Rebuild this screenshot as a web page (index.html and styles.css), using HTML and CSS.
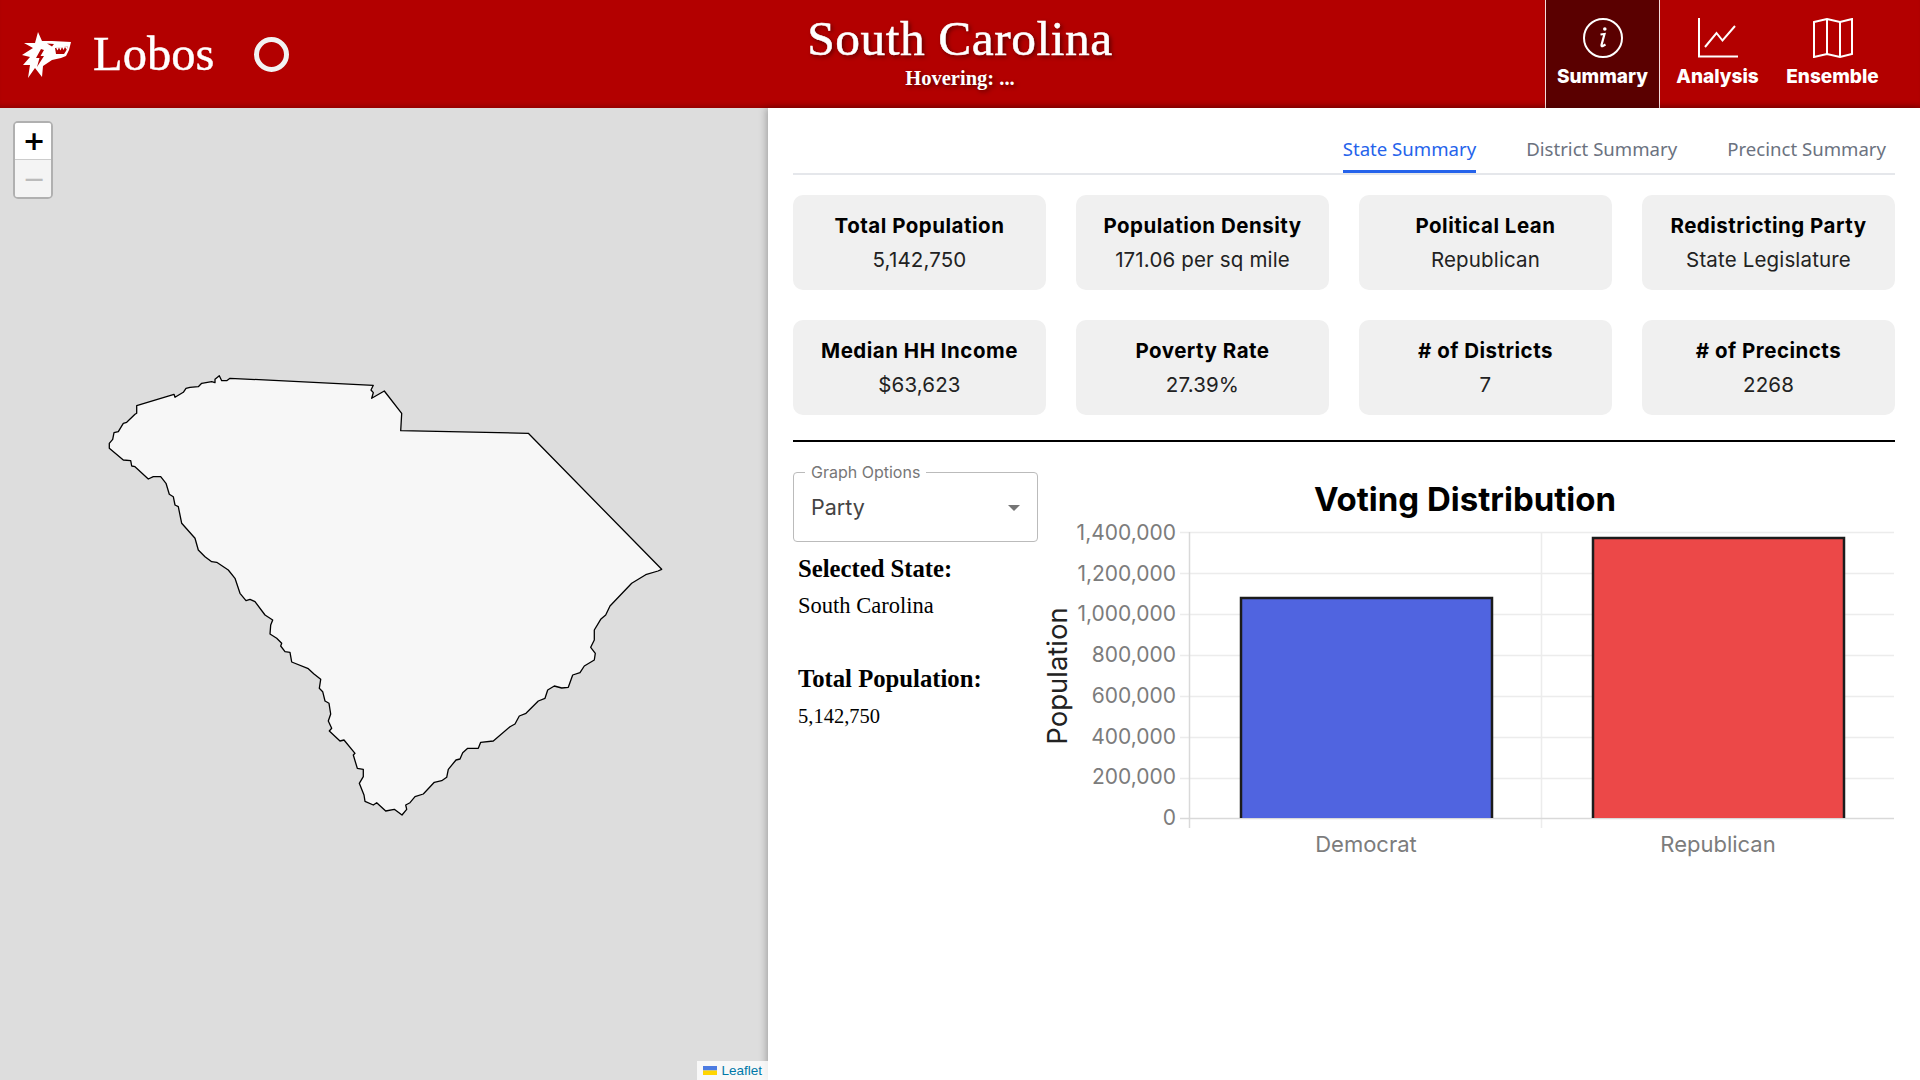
FILE: index.html
```html
<!DOCTYPE html>
<html lang="en">
<head>
    <meta charset="UTF-8">
    <meta name="viewport" content="width=device-width, initial-scale=1.0">
    <title>Lobos - South Carolina</title>
    <link rel="stylesheet" href="styles.css">
</head>
<body>
    <header class="topbar">
        <div class="brand">
            <svg class="brand-logo" viewBox="20 29 54 50" width="54" height="50">
                <path fill="#fff" d="M38 32 L42 41 L52 41 L71 42 L69 50 L66 56 L61 58 L52 60 L43 66 L42 77 L35 68 L28 78 L30 65 L23 65 L30 57 L22 55 L33 48 L24 43 L35 43 Z"/>
                <path fill="#b30000" d="M41 49 L36 58 L39.500 58 L37 67 L44 56 L40.500 56 L44 50 Z"/>
                <path fill="#b30000" d="M47 43.500 L54 44 L52 46.500 Z"/>
                <path fill="#b30000" d="M55 48 L68 46.500 L66 51 L64 54 L56 54 Z"/>
                <path fill="#fff" d="M56 47.500 L57.500 50.500 L59 47.500 L60.500 50.500 L62 47 L63.500 50 L65 47 L66.500 49.500 L68 46.500 Z"/>
            </svg>
            <span class="brand-name">Lobos</span>
            <span class="brand-ring"></span>
        </div>
        <div class="state-head">
            <h1>South Carolina</h1>
            <p>Hovering: ...</p>
        </div>
        <nav class="nav">
            <a class="nav-item active" href="#">
                <svg viewBox="0 0 40 40" width="40" height="40" fill="none" stroke="#fff" stroke-width="2">
                    <circle cx="20" cy="20" r="19"/>
                    <path d="M17.500 16.500 L21.500 16 L18.500 27 Q18.300 28.500 19.500 28.200 L22.500 26.500" stroke-width="2.200"/>
                    <circle cx="21.800" cy="11" r="1.800" fill="#fff" stroke="none"/>
                </svg>
                <span>Summary</span>
            </a>
            <a class="nav-item" href="#">
                <svg viewBox="0 0 40 40" width="40" height="40" fill="none" stroke="#fff" stroke-width="2">
                    <path d="M1 0 V38.500 H40"/>
                    <path d="M7 29 L18.500 15 L24.500 22.500 L37 8"/>
                </svg>
                <span>Analysis</span>
            </a>
            <a class="nav-item" href="#">
                <svg viewBox="0 0 40 40" width="40" height="40" fill="none" stroke="#fff" stroke-width="2">
                    <path d="M1 4 L14 1 L27 4 L39 1 V36 L27 39 L14 36 L1 39 Z"/>
                    <path d="M14 1 V36 M27 4 V39"/>
                </svg>
                <span>Ensemble</span>
            </a>
        </nav>
    </header>

    <main class="content">
        <section class="map">
            <div class="zoom-box">
                <button class="zoom-btn">+</button>
                <button class="zoom-btn disabled">&minus;</button>
            </div>
            <svg class="map-shape" viewBox="0 108 768 972" width="768" height="972">
                <path fill="#f7f7f7" stroke="#000" stroke-width="1.300" stroke-linejoin="round" d="M230 378.300 L373.300 385.300 L371 390 L373.300 392.700 L371.700 398.300 L384.300 391 L401.700 413.300 L400.700 430.700 L528.300 433.300 L661.700 569.300 L658 571 L645.700 574.700 L631.700 583.300 L610 606 L605.700 615 L600.700 619.300 L594.300 630 L594.300 640 L590.700 647.300 L595.300 653.300 L594.300 660 L584.300 666 L580 672.700 L572.700 675 L568.300 687.300 L561.700 688 L554.300 686 L547.700 690 L545 698.300 L538.300 701 L526 713.300 L519.300 716 L515 724 L510 726.700 L493.300 741 L480.700 742.300 L478.300 748.300 L467.700 748.300 L462.700 752.700 L460 759 L456 760 L448.300 769.300 L446.700 777.300 L441.700 780.700 L434.300 782.300 L423.300 794 L415 796.700 L410 802.700 L405.700 805 L406.700 809.300 L402 815 L394.300 809.300 L385.700 811 L376.700 802.700 L373.300 805 L365 801.300 L364 795 L359.300 783.300 L363.300 776.700 L363.300 769.300 L357.300 768.300 L353.300 755 L355 753.300 L344 740 L340 741 L329.300 731 L331.700 728.300 L328.300 721 L330.700 714 L329 703.300 L325 701 L322.700 691.700 L319.300 688.300 L320.700 679.300 L314 674 L308.300 668.700 L291.700 662 L290 652.300 L285 651.700 L280.700 646 L281.700 643.300 L276.700 638.300 L270 634 L270.700 625 L272.700 620 L265 615 L255 601.700 L250 599.300 L246 600.700 L240 593.300 L235 578.300 L228.300 570 L216.700 562.300 L211.700 561.700 L205 556.700 L198.300 550 L195 538.300 L181.700 523.300 L178.300 506.700 L175 505 L173.300 496.700 L169.300 494.300 L166 483.300 L160.700 476.700 L153.300 476.700 L148.300 479 L135 466.700 L131.700 466 L130.700 460.700 L123.300 460 L109.300 448.300 L109.300 443.300 L112.700 439.300 L114 432.700 L118.300 431.700 L123.300 423.300 L126.700 422.300 L135 414.300 L136.700 413.300 L136.700 405.700 L174 394.300 L175 397.300 L183.300 392.300 L186 388.300 L190 387.300 L198.300 386.700 L201.700 383.300 L211.700 381.700 L215 382.700 L215 379.300 L219.300 375.700 L221.700 380.700 L226.700 380.700 Z"/>
            </svg>
            <div class="attribution">
                <svg width="14" height="9" viewBox="0 0 14 9"><rect width="14" height="4.500" fill="#4c7be1"/><rect y="4.500" width="14" height="4.500" fill="#ffd500"/></svg>
                <a href="#">Leaflet</a>
            </div>
        </section>

        <section class="panel">
            <div class="tabs">
                <a class="tab active" href="#">State Summary</a>
                <a class="tab" href="#">District Summary</a>
                <a class="tab" href="#">Precinct Summary</a>
            </div>

            <div class="cards">
                <div class="card"><h3>Total Population</h3><p>5,142,750</p></div>
                <div class="card"><h3>Population Density</h3><p>171.06 per sq mile</p></div>
                <div class="card"><h3>Political Lean</h3><p>Republican</p></div>
                <div class="card"><h3>Redistricting Party</h3><p>State Legislature</p></div>
                <div class="card"><h3>Median HH Income</h3><p>$63,623</p></div>
                <div class="card"><h3>Poverty Rate</h3><p>27.39%</p></div>
                <div class="card"><h3># of Districts</h3><p>7</p></div>
                <div class="card"><h3># of Precincts</h3><p>2268</p></div>
            </div>

            <div class="graph-row">
                <div class="graph-side">
                    <div class="select-box">
                        <label>Graph Options</label>
                        <span>Party</span>
                        <i class="select-arrow"></i>
                    </div>
                    <div class="info">
                        <h4>Selected State:</h4>
                        <p>South Carolina</p>
                    </div>
                    <div class="info">
                        <h4>Total Population:</h4>
                        <p class="num">5,142,750</p>
                    </div>
                </div>
                <svg class="chart" viewBox="1040 472 860 400" width="860" height="400">
                    <text class="chart-title" x="1465" y="511" text-anchor="middle">Voting Distribution</text>

                    <g stroke="#ececec" stroke-width="1.500">
                        <path d="M1180 532.500 H1894"/>
                        <path d="M1180 573.500 H1894"/>
                        <path d="M1180 614.500 H1894"/>
                        <path d="M1180 655.500 H1894"/>
                        <path d="M1180 696.500 H1894"/>
                        <path d="M1180 737.500 H1894"/>
                        <path d="M1180 778.500 H1894"/>
                        <path d="M1541.500 532 V828"/>
                    </g>
                    <path d="M1180 818.500 H1894 M1189.500 532 V828" stroke="#d9d9d9" stroke-width="1.500" fill="none"/>

                    <rect x="1240" y="597" width="253" height="221" fill="#5064e0"/>
                    <path d="M1241 818 V598 H1492 V818" fill="none" stroke="#1c1c1c" stroke-width="2.500"/>
                    <rect x="1592" y="537" width="253" height="281" fill="#ec4848"/>
                    <path d="M1593 818 V538 H1844 V818" fill="none" stroke="#1c1c1c" stroke-width="2.500"/>

                    <g class="tick" text-anchor="end">
                        <text x="1176" y="540">1,400,000</text>
                        <text x="1176" y="581">1,200,000</text>
                        <text x="1176" y="621">1,000,000</text>
                        <text x="1176" y="662">800,000</text>
                        <text x="1176" y="703">600,000</text>
                        <text x="1176" y="744">400,000</text>
                        <text x="1176" y="784">200,000</text>
                        <text x="1176" y="825">0</text>
                    </g>
                    <g class="tick tick-name" text-anchor="middle">
                        <text x="1366" y="852">Democrat</text>
                        <text x="1718" y="852">Republican</text>
                    </g>
                    <text class="axis-name" transform="translate(1067 676) rotate(-90)" text-anchor="middle">Population</text>
                </svg>
            </div>
        </section>
    </main>
</body>
</html>
```

FILE: styles.css
```css
*{
    box-sizing: border-box;
}
html, body{
    margin: 0;
    height: 100%;
    overflow: hidden;
}
body{
    display: flex;
    flex-direction: column;
    font-family: "Inter", "Liberation Sans", sans-serif;
    background-color: #fff;
}

/* top bar */
.topbar{
    height: 108px;
    flex: none;
    display: grid;
    grid-template-columns: 1fr auto 1fr;
    align-items: stretch;
    background-color: #b30000;
    box-shadow: inset 0 -5px 5px -3px rgba(0,0,0,0.2);
    color: #fff;
}
.brand{
    display: flex;
    align-items: center;
    padding-left: 20px;
}
.brand-name{
    margin-left: 19px;
    font-family: "Liberation Serif", serif;
    font-size: 48.500px;
    line-height: 1;
    -webkit-text-stroke: 0.4px #fff;
}
.brand-ring{
    width: 35px;
    height: 35px;
    margin-left: 40px;
    border: 5px solid #f2f2f2;
    border-radius: 50%;
}
.state-head{
    text-align: center;
    font-family: "Liberation Serif", serif;
    text-shadow: 2px 2px 4px rgba(0,0,0,0.5);
}
.state-head h1{
    margin: 14px 0 0;
    font-size: 49.500px;
    font-weight: 400;
    line-height: 50px;
    letter-spacing: 0.5px;
    -webkit-text-stroke: 0.5px #fff;
}
.state-head p{
    margin: 2px 0 0;
    font-size: 20.500px;
    font-weight: 700;
    line-height: 24px;
}
.nav{
    display: flex;
    justify-content: flex-end;
    padding-right: 30px;
}
.nav-item{
    width: 115px;
    display: flex;
    flex-direction: column;
    align-items: center;
    padding-top: 18px;
    color: #fff;
    text-decoration: none;
    font-size: 19px;
    font-weight: 800;
}
.nav-item span{
    margin-top: 7px;
}
.nav-item.active{
    background-color: #5a0000;
    border-left: 1px solid #f3dcdc;
    border-right: 1px solid #f3dcdc;
}

/* map */
.content{
    flex: 1;
    display: flex;
    min-height: 0;
}
.map{
    width: 768px;
    flex: none;
    position: relative;
    background-color: #ddd;
}
.map-shape{
    position: absolute;
    top: 0;
    left: 0;
}
.zoom-box{
    position: absolute;
    top: 13px;
    left: 13px;
    z-index: 10;
    width: 40px;
    display: flex;
    flex-direction: column;
    border: 2px solid rgba(0,0,0,0.2);
    border-radius: 5px;
    background-clip: padding-box;
}
.zoom-btn{
    width: 36px;
    height: 37px;
    padding: 0 0 0 2px;
    border: 0;
    border-radius: 2px 2px 0 0;
    border-bottom: 1px solid #ccc;
    background-color: #fff;
    color: #000;
    font-family: "DejaVu Sans", sans-serif;
    font-size: 27px;
    font-weight: 700;
    line-height: 36px;
}
.zoom-btn.disabled{
    height: 37px;
    border-bottom: 0;
    border-radius: 0 0 2px 2px;
    background-color: #f4f4f4;
    color: #bbb;
    font-weight: 400;
}
.attribution{
    position: absolute;
    right: 0;
    bottom: 0;
    z-index: 10;
    height: 19px;
    display: flex;
    align-items: center;
    gap: 4px;
    padding: 0 6px;
    background-color: rgba(255,255,255,0.8);
    font-family: "Liberation Sans", sans-serif;
    font-size: 13.500px;
}
.attribution a{
    color: #0078a8;
    text-decoration: none;
}

/* right panel */
.panel{
    flex: 1;
    min-width: 0;
    position: relative;
    padding: 0 25px 0 25px;
    background-color: #fff;
    box-shadow: -2px 0 7px rgba(0,0,0,0.25);
}
.tabs{
    height: 67px;
    display: flex;
    justify-content: flex-end;
    align-items: flex-end;
    gap: 50px;
    padding-right: 9px;
    border-bottom: 2px solid #e5e7eb;
}
.tab{
    height: 49px;
    padding-top: 12px;
    color: #6b7280;
    font-family: "Noto Sans", sans-serif;
    font-size: 18.600px;
    line-height: 26px;
    text-decoration: none;
}
.tab.active{
    color: #2563eb;
    border-bottom: 3px solid #2563eb;
}
.cards{
    display: grid;
    grid-template-columns: repeat(4, 1fr);
    gap: 30px;
    padding: 20px 0 25px;
    border-bottom: 2px solid #000;
}
.card{
    height: 95px;
    display: flex;
    flex-direction: column;
    align-items: center;
    justify-content: center;
    background-color: #f0f0f0;
    border-radius: 10px;
    text-align: center;
}
.card h3{
    margin: 1px 0 10px;
    font-size: 20.500px;
    font-weight: 700;
    line-height: 24px;
    color: #000;
    letter-spacing: 0.5px;
}
.card p{
    margin: 0;
    font-size: 20.500px;
    line-height: 24px;
    color: #222;
    letter-spacing: 0.15px;
}

/* graph area */
.graph-row{
    display: flex;
    padding-top: 30px;
}
.graph-side{
    width: 245px;
    flex: none;
}
.select-box{
    height: 70px;
    position: relative;
    display: flex;
    align-items: center;
    padding-left: 17px;
    border: 1px solid #bbb;
    border-radius: 4px;
    color: #444;
    font-size: 21.500px;
}
.select-box label{
    position: absolute;
    top: -10px;
    left: 11px;
    padding: 0 6px;
    background-color: #fff;
    color: #777;
    font-size: 16px;
    line-height: 18px;
}
.select-arrow{
    position: absolute;
    top: 32px;
    right: 17px;
    border-top: 6px solid #757575;
    border-left: 6px solid transparent;
    border-right: 6px solid transparent;
}
.info{
    padding-left: 5px;
    height: 110px;
    font-family: "Liberation Serif", serif;
    color: #000;
}
.select-box + .info{
    margin-top: 13px;
}
.info h4{
    margin: 0 0 10px;
    font-size: 24.700px;
    line-height: 28px;
    font-weight: 700;
}
.info p{
    margin: 0;
    font-size: 22.500px;
    line-height: 26px;
}
.info p.num{
    font-size: 20.500px;
}
.chart{
    flex: none;
    margin-left: 2px;
    margin-top: 0;
    overflow: visible;
}
.chart-title{
    font-size: 33px;
    font-weight: 700;
    fill: #000;
}
.tick text{
    font-size: 21px;
    fill: #7c7c7c;
}
.tick-name text{
    font-size: 22px;
}
.axis-name{
    font-size: 27.500px;
    fill: #222;
}
```
